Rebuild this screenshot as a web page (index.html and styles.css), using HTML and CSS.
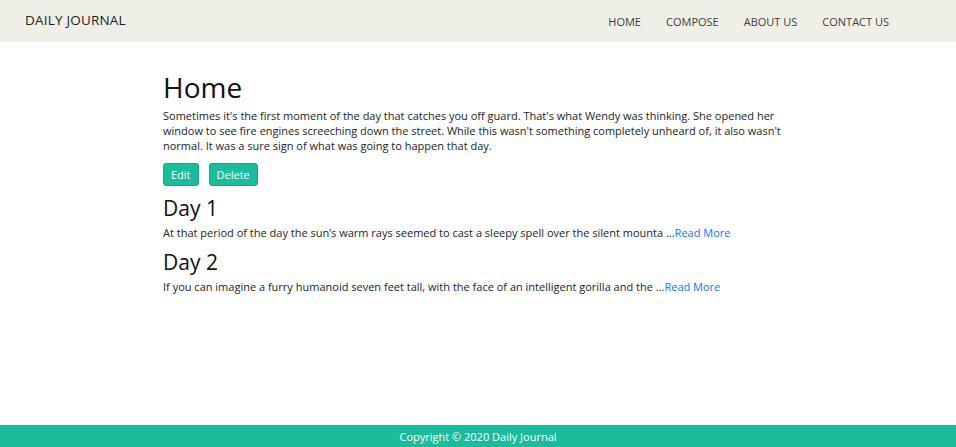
FILE: index.html
```html
<!DOCTYPE html>
<html lang="en">
<head>
<meta charset="utf-8">
<title>Daily Journal</title>
<link rel="stylesheet" href="styles.css">
</head>
<body>
<div class="page">
  <nav class="navbar">
    <a class="brand" href="#">DAILY JOURNAL</a>
    <ul class="nav">
      <li><a href="#">HOME</a></li>
      <li><a href="#">COMPOSE</a></li>
      <li><a href="#">ABOUT US</a></li>
      <li><a href="#">CONTACT US</a></li>
    </ul>
  </nav>
  <main class="container">
    <h1 class="title">Home</h1>
    <p class="text">Sometimes it's the first moment of the day that catches you off guard. That's what Wendy was thinking. She opened her window to see fire engines screeching down the street. While this wasn't something completely unheard of, it also wasn't normal. It was a sure sign of what was going to happen that day.</p>
    <div class="actions">
      <button class="btn">Edit</button>
      <button class="btn">Delete</button>
    </div>
    <section class="post">
      <h2 class="post-title">Day 1</h2>
      <p class="text">At that period of the day the sun’s warm rays seemed to cast a sleepy spell over the silent mounta ...<a class="more" href="#">Read More</a></p>
    </section>
    <section class="post">
      <h2 class="post-title">Day 2</h2>
      <p class="text">If you can imagine a furry humanoid seven feet tall, with the face of an intelligent gorilla and the ...<a class="more" href="#">Read More</a></p>
    </section>
  </main>
  <footer class="footer">Copyright © 2020 Daily Journal</footer>
</div>
</body>
</html>
```
FILE: styles.css
```css
* { box-sizing: border-box; }
html, body { margin: 0; padding: 0; }
body {
  font-family: "Open Sans", "DejaVu Sans", sans-serif;
  color: #212529;
  background: #fff;
}
.page {
  min-height: 100vh;
  display: flex;
  flex-direction: column;
}
.navbar {
  height: 42px;
  background: #f0efe7;
  display: flex;
  align-items: center;
  justify-content: space-between;
  padding: 0 67px 3px 25px;
}
.brand {
  font-size: 13.5px;
  color: #1b1f23;
  text-decoration: none;
  letter-spacing: 0.2px;
}
.nav {
  list-style: none;
  display: flex;
  gap: 25px;
  margin: 0;
  padding: 0;
}
.nav a {
  font-size: 11px;
  color: #3e3e3e;
  text-decoration: none;
}
.container {
  flex: 1;
  width: 630px;
  margin: 0 auto;
  padding-top: 28px;
}
.title {
  font-size: 28px;
  font-weight: 400;
  margin: 0 0 4px;
  line-height: 34px;
  color: #111;
}
.text {
  font-size: 11px;
  line-height: 15px;
  margin: 0 0 10px;
  color: #212529;
}
.actions {
  display: flex;
  gap: 10px;
  margin-bottom: 9px;
}
.btn {
  font-family: inherit;
  font-size: 11px;
  color: #fff;
  background: #1abc9c;
  border: 1px solid #17a589;
  border-radius: 3px;
  height: 23px;
  padding: 0 7px;
}
.post-title {
  font-size: 21px;
  font-weight: 400;
  margin: 0 0 4px;
  line-height: 26px;
  color: #111;
}
.post + .post .post-title {
  margin-top: -1px;
}
.more {
  color: #007bff;
  text-decoration: none;
}
.footer {
  height: 22px;
  background: #1abc9c;
  color: #fff;
  font-size: 11px;
  display: flex;
  align-items: center;
  justify-content: center;
}
```
